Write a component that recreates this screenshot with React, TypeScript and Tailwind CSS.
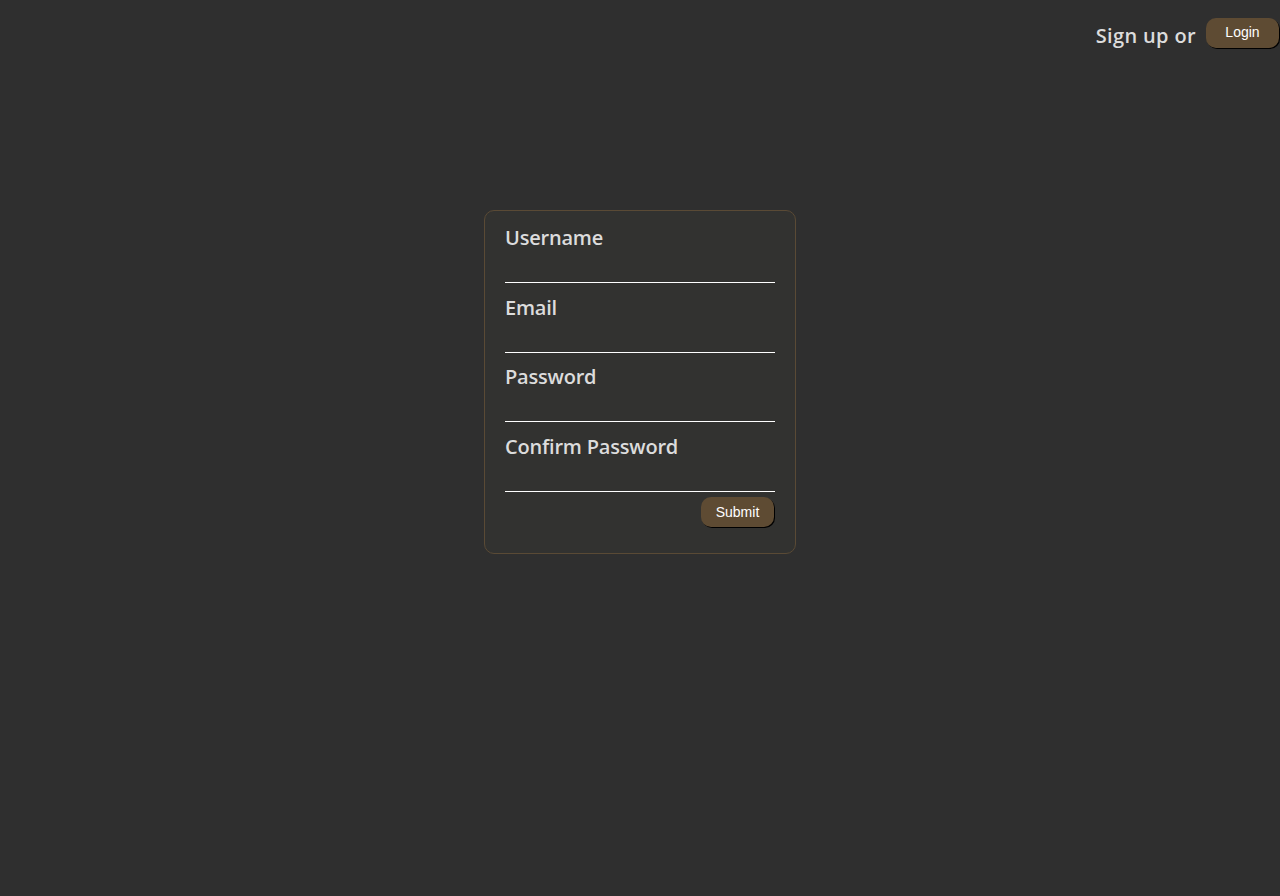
import { useState } from 'react';

const fields = [
  { name: 'username', label: 'Username', type: 'text' },
  { name: 'email', label: 'Email', type: 'email' },
  { name: 'password', label: 'Password', type: 'password' },
  { name: 'confirm', label: 'Confirm Password', type: 'password' },
];

export default function App() {
  const [values, setValues] = useState<Record<string, string>>({});

  return (
    <div className="min-h-[896px] bg-[#2f2f2f] font-['Open_Sans',sans-serif] text-[#dcdcdc]">
      {/* Header */}
      <div className="flex justify-end items-center pt-[17px] pr-px">
        <span className="text-[20px] font-semibold leading-[31px] translate-y-[3px] mr-[10px] tracking-[0.35px]">Sign up or</span>
        <button className="w-[73px] h-[30px] rounded-[10px] bg-[#5e4b33] shadow-[1px_1px_0_0_#000] text-white text-[14px] font-['Liberation_Sans',sans-serif]">
          Login
        </button>
      </div>

      {/* Form card */}
      <div className="flex justify-center pt-[162px]">
        <form
          onSubmit={(e) => e.preventDefault()}
          className="w-[312px] border border-[#5a4a35] rounded-[10px] bg-[#323230] px-[20px] pt-[10px] pb-[26px]"
        >
          {fields.map((f, i) => (
            <div key={f.name} className={i === fields.length - 1 ? 'mb-[5px]' : 'mb-[7.7px]'}>
              <label htmlFor={f.name} className="block pt-[3px] text-[20px] font-semibold leading-[28px] tracking-[-0.2px]">
                {f.label}
              </label>
              <input
                id={f.name}
                type={f.type}
                value={values[f.name] || ''}
                onChange={(e) => setValues({ ...values, [f.name]: e.target.value })}
                className="block w-full h-[31px] bg-transparent border-b border-white outline-none text-white"
              />
            </div>
          ))}
          <div className="flex justify-end">
            <button
              type="submit"
              className="w-[73px] h-[30px] mr-px rounded-[10px] bg-[#5e4b33] shadow-[1px_1px_0_0_#000] text-white text-[14px] font-['Liberation_Sans',sans-serif]"
            >
              Submit
            </button>
          </div>
        </form>
      </div>
    </div>
  );
}
